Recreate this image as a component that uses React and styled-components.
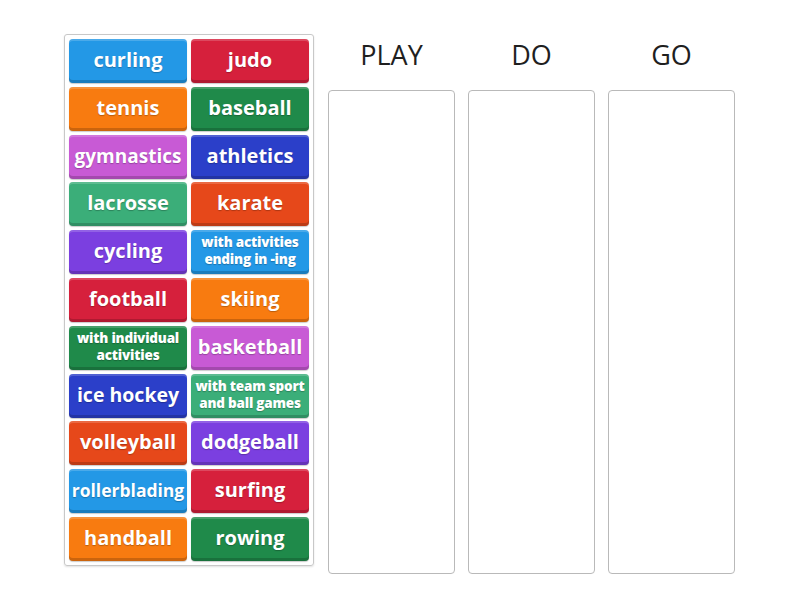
import React from 'react'
import styled, { createGlobalStyle } from 'styled-components'

const GlobalStyle = createGlobalStyle`
  body {
    margin: 0;
    background: #ffffff;
    font-family: 'Open Sans', 'Liberation Sans', sans-serif;
  }
`;

const palette = ['#2398e6', '#d6203c', '#f87b10', '#1f8a4a', '#c85ad5', '#2b3fc9', '#3bae79', '#e6481a', '#7b3fe0'];

const tiles = [
  { text: ['curling'] },
  { text: ['judo'] },
  { text: ['tennis'] },
  { text: ['baseball'] },
  { text: ['gymnastics'], size: 19 },
  { text: ['athletics'] },
  { text: ['lacrosse'] },
  { text: ['karate'] },
  { text: ['cycling'] },
  { text: ['with activities', 'ending in -ing'], small: true },
  { text: ['football'] },
  { text: ['skiing'] },
  { text: ['with individual', 'activities'], small: true },
  { text: ['basketball'] },
  { text: ['ice hockey'], size: 19.5 },
  { text: ['with team sport', 'and ball games'], small: true },
  { text: ['volleyball'] },
  { text: ['dodgeball'] },
  { text: ['rollerblading'], size: 17.5 },
  { text: ['surfing'] },
  { text: ['handball'] },
  { text: ['rowing'] },
];

const Page = styled.div`
  display: flex;
  align-items: flex-start;
  padding: 34px 0 0 64px;
  width: 800px;
  height: 600px;
  box-sizing: border-box;
`;

const TileBoard = styled.div`
  display: grid;
  grid-template-columns: 118px 118px;
  grid-auto-rows: 44px;
  column-gap: 4px;
  row-gap: 3.8px;
  padding: 4px;
  border: 1px solid #c8c8c8;
  border-radius: 3px;
  box-shadow: 0 1px 2px rgba(0, 0, 0, 0.12);
`;

const Tile = styled.div`
  display: flex;
  flex-direction: column;
  align-items: center;
  justify-content: center;
  text-align: center;
  background: ${p => p.$color};
  border-radius: 4px;
  box-shadow: inset 0 -3px 0 rgba(0, 0, 0, 0.18), inset 0 2px 0 rgba(255, 255, 255, 0.18), 0 1px 1px rgba(0, 0, 0, 0.2);
  color: #ffffff;
  font-weight: ${p => (p.$small ? 800 : 700)};
  font-size: ${p => (p.$small ? 13.5 : p.$size || 20)}px;
  line-height: ${p => (p.$small ? '17px' : '24px')};
  letter-spacing: ${p => (p.$small ? '-0.2px' : '0')};
  padding: 0 1px 2px;
  text-shadow: 0 1px 1px rgba(0, 0, 0, 0.25);
  overflow: hidden;
`;

const Line = styled.span`
  display: block;
  white-space: nowrap;
`;

const Groups = styled.div`
  display: flex;
  gap: 13px;
  margin-left: 14px;
`;

const Group = styled.div`
  display: flex;
  flex-direction: column;
  width: 127px;
`;

const GroupTitle = styled.div`
  height: 56px;
  padding-bottom: 15px;
  box-sizing: border-box;
  display: flex;
  align-items: center;
  justify-content: center;
  font-size: 27px;
  color: #1f1f1f;
  font-weight: 400;
`;

const DropBox = styled.div`
  height: 484px;
  border: 1px solid #b9b9b9;
  border-radius: 4px;
  box-sizing: border-box;
`;

export default function App() {
  return (
    <Page>
      <GlobalStyle />
      <TileBoard>
        {tiles.map((t, i) => (
          <Tile key={i} $color={palette[i % palette.length]} $small={t.small} $size={t.size}>
            {t.text.map(line => <Line key={line}>{line}</Line>)}
          </Tile>
        ))}
      </TileBoard>
      <Groups>
        {['PLAY', 'DO', 'GO'].map(g => (
          <Group key={g}>
            <GroupTitle>{g}</GroupTitle>
            <DropBox />
          </Group>
        ))}
      </Groups>
    </Page>
  )
}
